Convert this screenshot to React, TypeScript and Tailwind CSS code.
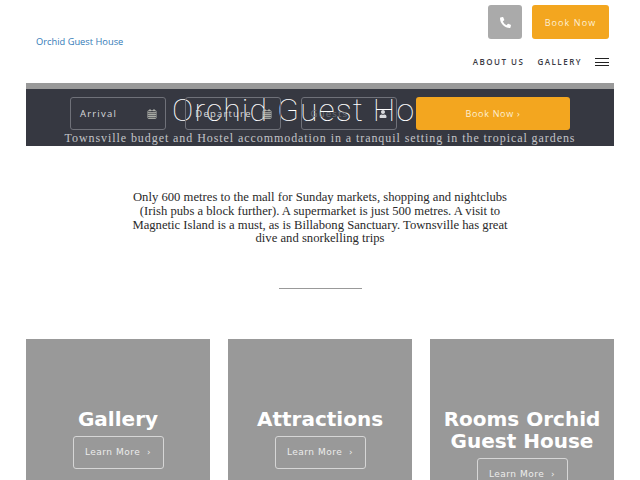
import { FaPhoneAlt, FaUser } from "react-icons/fa";

const cards = [
  { title: "Gallery", lines: ["Gallery"] },
  { title: "Attractions", lines: ["Attractions"] },
  { title: "Rooms Orchid Guest House", lines: ["Rooms Orchid", "Guest House"] },
];

function CalendarIcon() {
  return (
    <svg width="10" height="10" viewBox="0 0 10 10" fill="none" stroke="#c6c8bf" strokeWidth="0.7">
      <rect x="0.9" y="1.6" width="8.2" height="7.9" rx="0.6" />
      <path d="M0.9 3.6H9.1M0.9 5.5H9.1M0.9 7.5H9.1M3 3.6V9.5M5 3.6V9.5M7 3.6V9.5" />
      <path d="M3 0.3V2.2M7 0.3V2.2" strokeWidth="1.1" />
    </svg>
  );
}

function Field({ label, guests }: { label: string; guests?: boolean }) {
  return (
    <div className="flex h-[33px] w-[96px] items-center justify-between rounded-[3px] border border-[#6f7179] pl-[9px] pr-[8px] pt-[1px]">
      <span className={`text-[9.5px] font-medium tracking-[1.2px] ${guests ? "text-[#6f7179]" : "text-[#d8d9dc]"}`}>{label}</span>
      {guests ? <FaUser className="mr-[1px] text-[8px] text-[#d8d9dc]" /> : <CalendarIcon />}
    </div>
  );
}

export default function App() {
  return (
    <div className="h-screen overflow-hidden bg-white px-[26px] font-['Open_Sans',sans-serif]">
      <header className="flex h-[83px] justify-between">
        <a className="pl-[10px] pt-[35px] text-[9.3px] leading-[13px] text-[#337ab7]">Orchid Guest House</a>
        <div className="flex flex-col items-end pr-[5px] pt-[5px]">
          <div className="flex gap-[10px]">
            <div className="flex h-[34px] w-[34px] items-center justify-center rounded-[3px] bg-[#aaaaaa]">
              <FaPhoneAlt className="text-[11px] text-white" />
            </div>
            <div className="flex h-[34px] w-[77px] items-center justify-center rounded-[3px] bg-[#f3a61f] pt-[1px] text-[9px] font-medium tracking-[1.1px] text-[#fdf0d5]">
              Book Now
            </div>
          </div>
          <nav className="mt-[17px] flex items-center text-[8px] font-semibold tracking-[1.5px] text-[#3a3a44]">
            <span>ABOUT US</span>
            <span className="ml-[13px]">GALLERY</span>
            <div className="ml-[13px] flex w-[14px] flex-col gap-[2.5px]">
              <span className="h-px bg-[#222]" />
              <span className="h-px bg-[#222]" />
              <span className="h-px bg-[#222]" />
            </div>
          </nav>
        </div>
      </header>

      <section className="relative h-[63px] overflow-hidden border-t-[6px] border-[#999] bg-[#363841] text-center">
        <h1 className="mt-[1px] whitespace-nowrap font-['Roboto',sans-serif] text-[32px] font-thin leading-[41px] tracking-[1.1px] text-white">
          Orchid Guest House
        </h1>
        <p className="whitespace-nowrap font-['Liberation_Serif',serif] text-[12px] leading-[14px] tracking-[0.93px] text-[#c3c4c8]">
          Townsville budget and Hostel accommodation in a tranquil setting in the tropical gardens
        </p>
        <form className="absolute left-[44px] top-[8px] flex gap-[19.3px]">
          <Field label="Arrival" />
          <Field label="Departure" />
          <Field label="Guests" guests />
          <div className="flex h-[33px] w-[154px] items-center justify-center rounded-[3px] bg-[#f3a61f] pt-[1px] text-[9px] font-medium tracking-[0.7px] text-[#fdf0d5]">
            Book Now&nbsp;›
          </div>
        </form>
      </section>

      <section className="pt-[45px] text-center">
        <p className="mx-auto w-[385px] font-['Liberation_Serif',serif] text-[12.66px] leading-[13.8px] text-[#2a2a2a]">
          Only 600 metres to the mall for Sunday markets, shopping and nightclubs (Irish pubs a block further). A supermarket is just 500 metres. A visit to Magnetic Island is a must, as is Billabong Sanctuary. Townsville has great dive and snorkelling trips
        </p>
        <div className="mx-auto mt-[42px] h-px w-[83px] bg-[#999]" />
      </section>

      <section className="mt-[50px] grid grid-cols-3 gap-[18px]">
        {cards.map((card) => (
          <div key={card.title} className="flex h-[160px] flex-col items-center bg-[#999] pt-[69px] text-center text-white">
            <h2 className="font-['DejaVu_Sans',sans-serif] text-[20px] font-bold leading-[22px]">
              {card.lines.map((line) => (
                <div key={line}>{line}</div>
              ))}
            </h2>
            <a className="mt-[6px] flex h-[33px] w-[91px] shrink-0 items-center justify-center rounded-[3px] border border-[#d6d6d6] pt-[1px] font-['DejaVu_Sans',sans-serif] text-[9px] tracking-[0.5px] text-[#ececec]">
              Learn More&nbsp;&nbsp;›
            </a>
          </div>
        ))}
      </section>
    </div>
  );
}
